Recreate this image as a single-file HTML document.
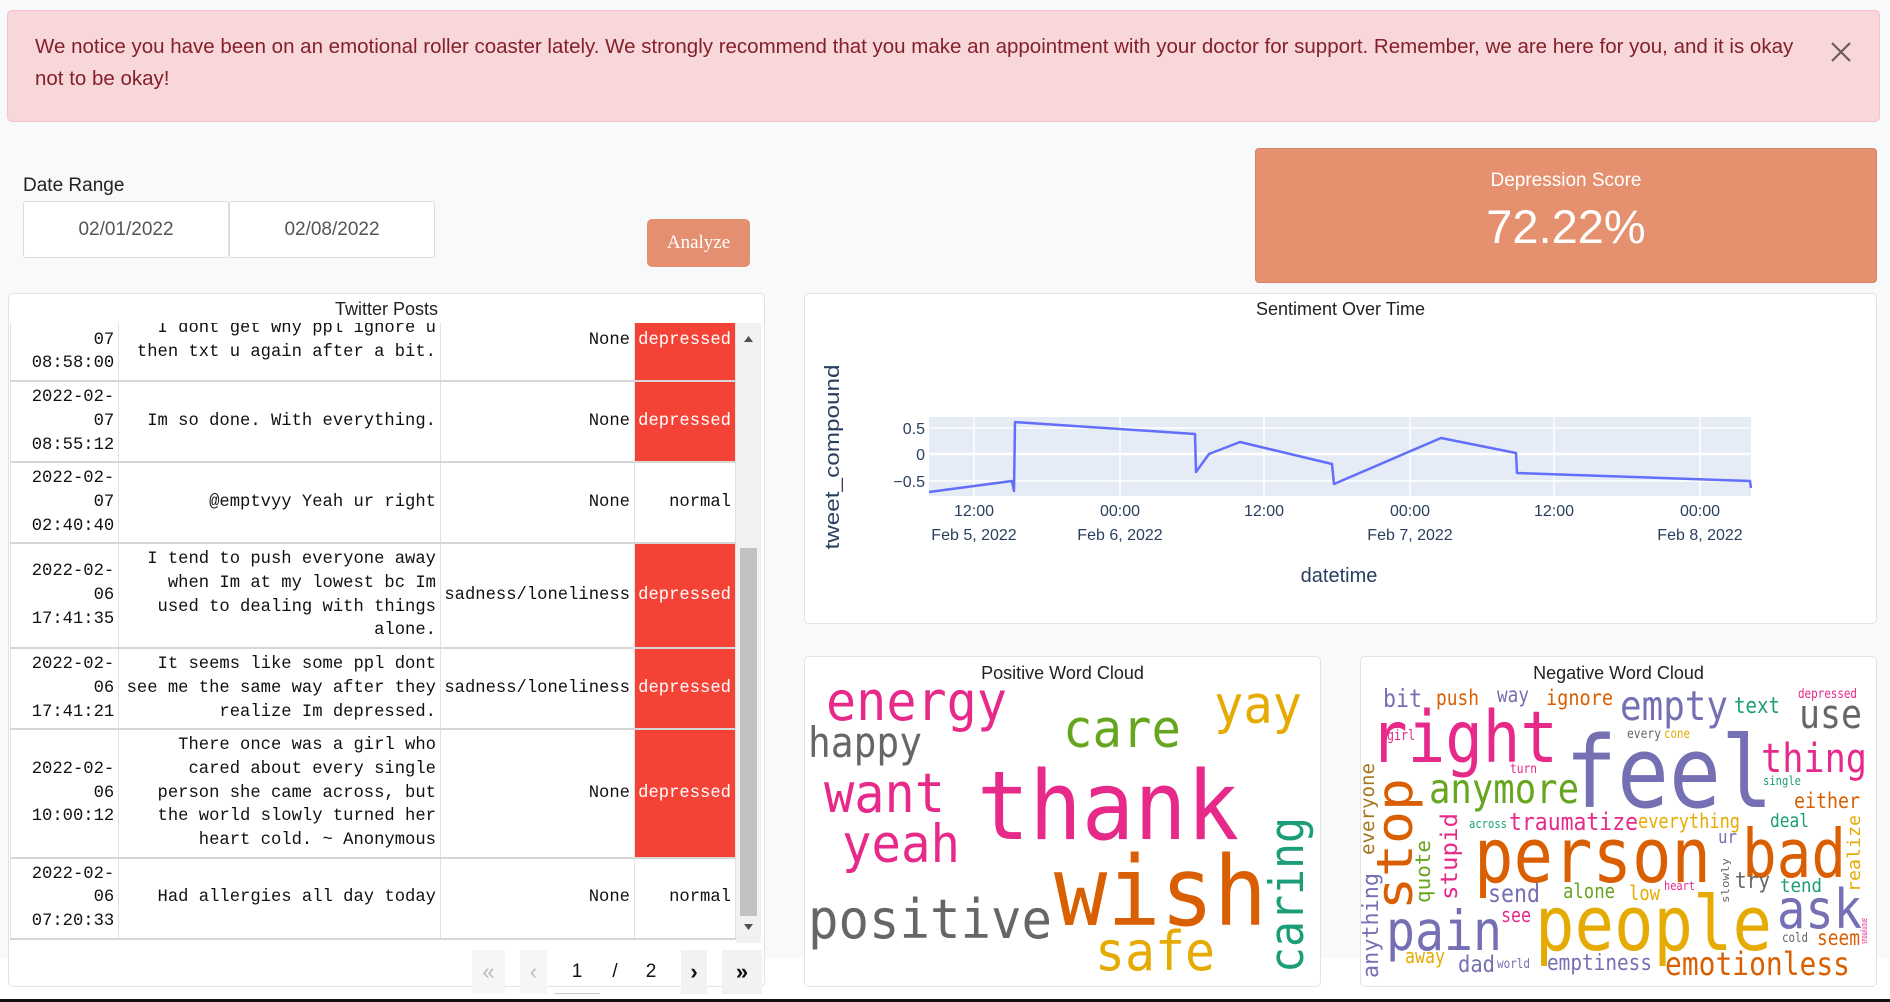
<!DOCTYPE html>
<html><head><meta charset="utf-8">
<style>
*{box-sizing:border-box;margin:0;padding:0}
body{width:1890px;height:1002px;position:relative;overflow:hidden;background:#fff;font-family:"Liberation Sans",sans-serif}
.bg{position:absolute;left:0;top:0;width:1890px;height:958px;background:#f8f9fa}
.blk{position:absolute;left:0;top:999px;width:1890px;height:3px;background:#111}
.alert{position:absolute;left:7px;top:10px;width:1873px;height:112px;background:#f8d7da;border:1px solid #f5c2c7;border-radius:5px;color:#842029;font-size:20.5px;line-height:32px;padding:20px 0 0 27px;white-space:nowrap}
.card{position:absolute;background:#fff;border:1px solid #e3e3e3;border-radius:5px}
.ttl{position:absolute;left:0;width:100%;text-align:center;font-size:18px;color:#222}
.inp{position:absolute;top:201px;height:57px;width:206px;background:#fff;border:1px solid #dcdcdc;border-radius:3px;text-align:center;line-height:55px;font-size:19px;color:#555}
table{border-collapse:collapse;font-family:"Liberation Mono",monospace;font-size:17.2px;line-height:23.7px;color:#111}
td{text-align:right;padding:4px 4px 4px 3px;border-left:1px solid #e2e2e2;border-right:1px solid #e2e2e2;border-bottom:2px solid #d6d6d6;vertical-align:middle;white-space:nowrap}
td.r{background:#f44336;color:#fff}
.pg{position:absolute;top:950px;height:44px;text-align:center;line-height:44px;font-size:22px}
</style></head><body>
<div class="bg"></div>
<div class="blk"></div>
<div class="alert">We notice you have been on an emotional roller coaster lately. We strongly recommend that you make an appointment with your doctor for support. Remember, we are here for you, and it is okay<br>not to be okay!</div>
<svg style="position:absolute;left:1830px;top:41px" width="22" height="22"><path d="M2 2L20 20M20 2L2 20" stroke="#6b5b5e" stroke-width="2.2"/></svg>

<div style="position:absolute;left:23px;top:175px;font-size:19px;color:#222">Date Range</div>
<div class="inp" style="left:23px">02/01/2022</div>
<div class="inp" style="left:229px">02/08/2022</div>
<div style="position:absolute;left:647px;top:219px;width:103px;height:48px;background:#e48f6f;border-radius:5px;color:#fff;font-family:'Liberation Serif',serif;font-size:19px;text-align:center;line-height:48px">Analyze</div>

<div style="position:absolute;left:1255px;top:148px;width:622px;height:135px;background:#e5906e;border:1px solid #d98264;border-radius:4px;color:#fff;text-align:center">
<div style="position:absolute;top:21px;width:100%;font-size:19px">Depression Score</div>
<div style="position:absolute;top:50px;width:100%;font-size:47px">72.22%</div>
</div>

<div class="card" style="left:8px;top:293px;width:757px;height:694px">
<div class="ttl" style="top:5px;font-size:18px">Twitter Posts</div>
</div>
<div style="position:absolute;left:10px;top:323px;width:726px;height:620px;overflow:hidden">
<table style="position:absolute;top:-22px;left:0;width:726px">
<colgroup><col style="width:109px"><col style="width:322px"><col style="width:194px"><col style="width:101px"></colgroup>
<tr><td>2022-02-<br>07<br>08:58:00</td><td>I dont get why ppl ignore u<br>then txt u again after a bit.</td><td>None</td><td class="r">depressed</td></tr>
<tr><td>2022-02-<br>07<br>08:55:12</td><td>Im so done. With everything.</td><td>None</td><td class="r">depressed</td></tr>
<tr><td>2022-02-<br>07<br>02:40:40</td><td>@emptvyy Yeah ur right</td><td>None</td><td>normal</td></tr>
<tr><td>2022-02-<br>06<br>17:41:35</td><td>I tend to push everyone away<br>when Im at my lowest bc Im<br>used to dealing with things<br>alone.</td><td>sadness/loneliness</td><td class="r">depressed</td></tr>
<tr><td>2022-02-<br>06<br>17:41:21</td><td>It seems like some ppl dont<br>see me the same way after they<br>realize Im depressed.</td><td>sadness/loneliness</td><td class="r">depressed</td></tr>
<tr><td>2022-02-<br>06<br>10:00:12</td><td>There once was a girl who<br>cared about every single<br>person she came across, but<br>the world slowly turned her<br>heart cold. ~ Anonymous</td><td>None</td><td class="r">depressed</td></tr>
<tr><td>2022-02-<br>06<br>07:20:33</td><td>Had allergies all day today</td><td>None</td><td>normal</td></tr>
</table>
</div>
<div style="position:absolute;left:736px;top:323px;width:25px;height:620px;background:#f1f1f1"></div>
<div style="position:absolute;left:740px;top:548px;width:17px;height:368px;background:#c1c1c1"></div>
<svg style="position:absolute;left:736px;top:323px" width="25" height="620"><path d="M8 19L12.5 13L17 19Z" fill="#505050"/><path d="M8 601L12.5 607L17 601Z" fill="#505050"/></svg>

<div class="pg" style="left:472px;width:33px;background:#f6f6f6;color:#bbb">«</div>
<div class="pg" style="left:520px;width:27px;background:#f6f6f6;color:#bbb">‹</div>
<div class="pg" style="left:554px;width:46px;color:#111;font-size:19px;border-bottom:1px solid #ccc">1</div>
<div class="pg" style="left:605px;width:20px;color:#111;font-size:19px">/</div>
<div class="pg" style="left:640px;width:22px;color:#111;font-size:19px">2</div>
<div class="pg" style="left:681px;width:26px;background:#f2f2f2;color:#111;font-weight:bold">›</div>
<div class="pg" style="left:722px;width:40px;background:#f2f2f2;color:#111;font-weight:bold">»</div>

<div class="card" style="left:804px;top:293px;width:1073px;height:331px">
<div class="ttl" style="top:5px">Sentiment Over Time</div>
</div>
<div class="card" style="left:804px;top:656px;width:517px;height:331px">
<div class="ttl" style="top:6px">Positive Word Cloud</div>
</div>
<div class="card" style="left:1360px;top:656px;width:517px;height:331px">
<div class="ttl" style="top:6px">Negative Word Cloud</div>
</div>

<svg style="position:absolute;left:0;top:0" width="1890" height="1002">
<rect x="929" y="417" width="822" height="79" fill="#e5ecf6"/>
<g stroke="#fff" stroke-width="1.5">
<line x1="929" x2="1751" y1="428" y2="428"/><line x1="929" x2="1751" y1="454" y2="454" stroke-width="2.5"/><line x1="929" x2="1751" y1="481" y2="481"/>
<line x1="974" x2="974" y1="417" y2="496"/><line x1="1120" x2="1120" y1="417" y2="496"/><line x1="1264" x2="1264" y1="417" y2="496"/><line x1="1410" x2="1410" y1="417" y2="496"/><line x1="1554" x2="1554" y1="417" y2="496"/><line x1="1700" x2="1700" y1="417" y2="496"/>
</g>
<polyline fill="none" stroke="#636efa" stroke-width="2.5" stroke-linejoin="round" points="929,492 1012,481 1014,491 1015,422 1195,434 1196,472 1209,454 1240,442 1332,464 1334,484 1441,438 1516,453 1517,473 1750,481 1751,488"/>
<g font-family="Liberation Sans,sans-serif" font-size="16" fill="#2a3f5f" text-anchor="end">
<text x="925" y="434">0.5</text><text x="925" y="460">0</text><text x="925" y="487">−0.5</text>
</g>
<g font-family="Liberation Sans,sans-serif" font-size="16" fill="#2a3f5f" text-anchor="middle">
<text x="974" y="516">12:00</text><text x="1120" y="516">00:00</text><text x="1264" y="516">12:00</text><text x="1410" y="516">00:00</text><text x="1554" y="516">12:00</text><text x="1700" y="516">00:00</text>
<text x="974" y="540">Feb 5, 2022</text><text x="1120" y="540">Feb 6, 2022</text><text x="1410" y="540">Feb 7, 2022</text><text x="1700" y="540">Feb 8, 2022</text>
<text x="1339" y="582" font-size="20">datetime</text>
<text transform="translate(839 457) rotate(-90)" font-size="20" textLength="185" lengthAdjust="spacingAndGlyphs">tweet_compound</text>
</g>
<g font-family="DejaVu Sans Mono,monospace">
<text x="826" y="720" font-size="54" textLength="181" lengthAdjust="spacingAndGlyphs" fill="#e7298a">energy</text>
<text x="1214" y="723" font-size="53" textLength="88" lengthAdjust="spacingAndGlyphs" fill="#e6ab02">yay</text>
<text x="1063" y="747" font-size="53" textLength="118" lengthAdjust="spacingAndGlyphs" fill="#66a61e">care</text>
<text x="808" y="757" font-size="42" textLength="114" lengthAdjust="spacingAndGlyphs" fill="#666666">happy</text>
<text x="824" y="812" font-size="54" textLength="121" lengthAdjust="spacingAndGlyphs" fill="#e7298a">want</text>
<text x="977" y="839" font-size="95" textLength="262" lengthAdjust="spacingAndGlyphs" fill="#e7298a">thank</text>
<text x="842" y="862" font-size="53" textLength="118" lengthAdjust="spacingAndGlyphs" fill="#e7298a">yeah</text>
<text x="1054" y="925" font-size="96" textLength="213" lengthAdjust="spacingAndGlyphs" fill="#d95f02">wish</text>
<text x="808" y="938" font-size="54" textLength="244" lengthAdjust="spacingAndGlyphs" fill="#666666">positive</text>
<text x="1095" y="970" font-size="54" textLength="120" lengthAdjust="spacingAndGlyphs" fill="#e6ab02">safe</text>
<text x="1303" y="973" transform="rotate(-90 1303 973)" font-size="47" textLength="156" lengthAdjust="spacingAndGlyphs" fill="#1b9e77">caring</text>

<text x="1383" y="707" font-size="25" textLength="39" lengthAdjust="spacingAndGlyphs" fill="#7570b3">bit</text>
<text x="1436" y="705" font-size="21" textLength="43" lengthAdjust="spacingAndGlyphs" fill="#d95f02">push</text>
<text x="1497" y="702" font-size="21" textLength="32" lengthAdjust="spacingAndGlyphs" fill="#7570b3">way</text>
<text x="1546" y="705" font-size="21" textLength="67" lengthAdjust="spacingAndGlyphs" fill="#d95f02">ignore</text>
<text x="1798" y="698" font-size="13" textLength="59" lengthAdjust="spacingAndGlyphs" fill="#e7298a">depressed</text>
<text x="1620" y="720" font-size="41" textLength="108" lengthAdjust="spacingAndGlyphs" fill="#7570b3">empty</text>
<text x="1734" y="713" font-size="22" textLength="46" lengthAdjust="spacingAndGlyphs" fill="#1b9e77">text</text>
<text x="1799" y="728" font-size="40" textLength="63" lengthAdjust="spacingAndGlyphs" fill="#666666">use</text>
<text x="1370" y="762" font-size="71" textLength="188" lengthAdjust="spacingAndGlyphs" fill="#e7298a">right</text>
<text x="1387" y="740" font-size="14" textLength="28" lengthAdjust="spacingAndGlyphs" fill="#e7298a">girl</text>
<text x="1627" y="738" font-size="13" textLength="34" lengthAdjust="spacingAndGlyphs" fill="#666666">every</text>
<text x="1664" y="738" font-size="13" textLength="26" lengthAdjust="spacingAndGlyphs" fill="#e6ab02">cone</text>
<text x="1565" y="807" font-size="99" textLength="208" lengthAdjust="spacingAndGlyphs" fill="#7570b3">feel</text>
<text x="1761" y="772" font-size="40" textLength="106" lengthAdjust="spacingAndGlyphs" fill="#e7298a">thing</text>
<text x="1510" y="773" font-size="13" textLength="27" lengthAdjust="spacingAndGlyphs" fill="#e7298a">turn</text>
<text x="1763" y="785" font-size="12" textLength="38" lengthAdjust="spacingAndGlyphs" fill="#1b9e77">single</text>
<text x="1429" y="803" font-size="41" textLength="150" lengthAdjust="spacingAndGlyphs" fill="#66a61e">anymore</text>
<text x="1794" y="808" font-size="21" textLength="66" lengthAdjust="spacingAndGlyphs" fill="#d95f02">either</text>
<text x="1412" y="910" transform="rotate(-90 1412 910)" font-size="50" textLength="132" lengthAdjust="spacingAndGlyphs" fill="#d95f02">stop</text>
<text x="1374" y="855" transform="rotate(-90 1374 855)" font-size="19" textLength="92" lengthAdjust="spacingAndGlyphs" fill="#a6761d">everyone</text>
<text x="1469" y="828" font-size="12" textLength="38" lengthAdjust="spacingAndGlyphs" fill="#1b9e77">across</text>
<text x="1509" y="830" font-size="24" textLength="129" lengthAdjust="spacingAndGlyphs" fill="#e7298a">traumatize</text>
<text x="1638" y="828" font-size="20" textLength="102" lengthAdjust="spacingAndGlyphs" fill="#e6ab02">everything</text>
<text x="1770" y="827" font-size="19" textLength="39" lengthAdjust="spacingAndGlyphs" fill="#1b9e77">deal</text>
<text x="1457" y="900" transform="rotate(-90 1457 900)" font-size="23" textLength="87" lengthAdjust="spacingAndGlyphs" fill="#e7298a">stupid</text>
<text x="1430" y="903" transform="rotate(-90 1430 903)" font-size="20" textLength="63" lengthAdjust="spacingAndGlyphs" fill="#66a61e">quote</text>
<text x="1474" y="882" font-size="76" textLength="237" lengthAdjust="spacingAndGlyphs" fill="#d95f02">person</text>
<text x="1718" y="843" font-size="18" textLength="19" lengthAdjust="spacingAndGlyphs" fill="#7570b3">ur</text>
<text x="1742" y="877" font-size="67" textLength="104" lengthAdjust="spacingAndGlyphs" fill="#d95f02">bad</text>
<text x="1860" y="892" transform="rotate(-90 1860 892)" font-size="18" textLength="77" lengthAdjust="spacingAndGlyphs" fill="#e6ab02">realize</text>
<text x="1729" y="903" transform="rotate(-90 1729 903)" font-size="11" textLength="45" lengthAdjust="spacingAndGlyphs" fill="#666666">slowly</text>
<text x="1735" y="888" font-size="22" textLength="35" lengthAdjust="spacingAndGlyphs" fill="#666666">try</text>
<text x="1780" y="892" font-size="19" textLength="42" lengthAdjust="spacingAndGlyphs" fill="#1b9e77">tend</text>
<text x="1488" y="902" font-size="25" textLength="52" lengthAdjust="spacingAndGlyphs" fill="#7570b3">send</text>
<text x="1563" y="898" font-size="20" textLength="52" lengthAdjust="spacingAndGlyphs" fill="#66a61e">alone</text>
<text x="1629" y="900" font-size="20" textLength="31" lengthAdjust="spacingAndGlyphs" fill="#e6ab02">low</text>
<text x="1664" y="890" font-size="12" textLength="31" lengthAdjust="spacingAndGlyphs" fill="#e7298a">heart</text>
<text x="1378" y="978" transform="rotate(-90 1378 978)" font-size="22" textLength="105" lengthAdjust="spacingAndGlyphs" fill="#7570b3">anything</text>
<text x="1501" y="922" font-size="20" textLength="30" lengthAdjust="spacingAndGlyphs" fill="#e7298a">see</text>
<text x="1535" y="950" font-size="76" textLength="237" lengthAdjust="spacingAndGlyphs" fill="#e6ab02">people</text>
<text x="1777" y="928" font-size="54" textLength="85" lengthAdjust="spacingAndGlyphs" fill="#7570b3">ask</text>
<text x="1386" y="950" font-size="55" textLength="116" lengthAdjust="spacingAndGlyphs" fill="#7570b3">pain</text>
<text x="1782" y="942" font-size="13" textLength="26" lengthAdjust="spacingAndGlyphs" fill="#666666">cold</text>
<text x="1817" y="945" font-size="21" textLength="43" lengthAdjust="spacingAndGlyphs" fill="#d95f02">seem</text>
<text x="1405" y="963" font-size="20" textLength="40" lengthAdjust="spacingAndGlyphs" fill="#e6ab02">away</text>
<text x="1458" y="972" font-size="23" textLength="37" lengthAdjust="spacingAndGlyphs" fill="#7570b3">dad</text>
<text x="1497" y="968" font-size="13" textLength="33" lengthAdjust="spacingAndGlyphs" fill="#7570b3">world</text>
<text x="1547" y="970" font-size="22" textLength="105" lengthAdjust="spacingAndGlyphs" fill="#7570b3">emptiness</text>
<text x="1665" y="975" font-size="32" textLength="185" lengthAdjust="spacingAndGlyphs" fill="#d95f02">emotionless</text>
<text x="1862" y="918" transform="rotate(90 1862 918)" font-size="9" textLength="26" lengthAdjust="spacingAndGlyphs" fill="#e7298a">anonymous</text>
</g>
</svg>
</body></html>
